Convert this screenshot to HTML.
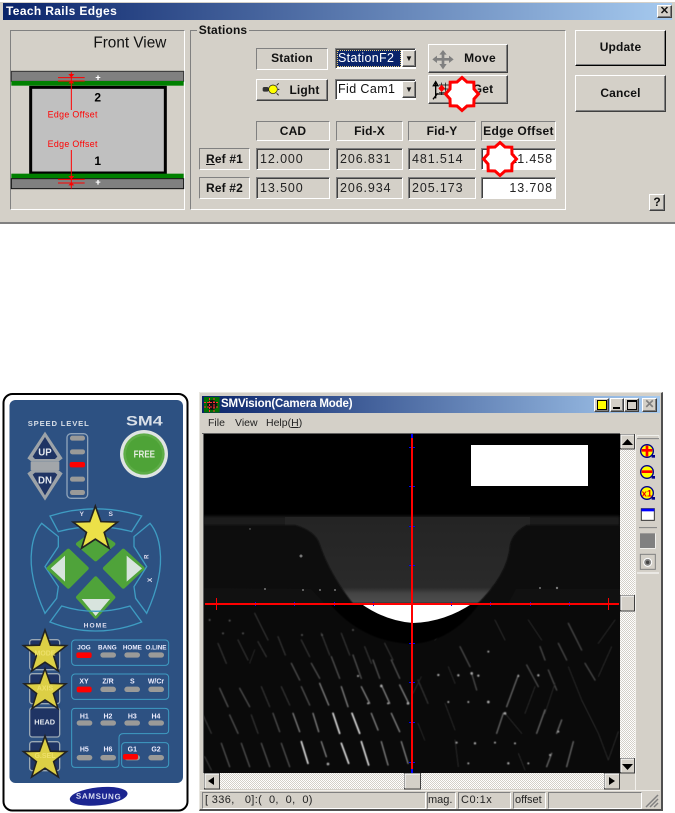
<!DOCTYPE html>
<html><head><meta charset="utf-8"><style>
html,body{margin:0;padding:0;background:#fff;width:675px;height:813px;overflow:hidden}
body{position:relative;font-family:"Liberation Sans",sans-serif;color:#111}
.a{position:absolute;box-sizing:border-box;text-align:center;white-space:pre}
.f{background:#d4d0c8}
.e{border:1px solid;border-color:#808080 #fff #fff #808080}
.r{border:1px solid;border-color:#fff #404040 #404040 #fff;box-shadow:inset -1px -1px #808080}
.s{border:1px solid;border-color:#808080 #fff #fff #808080;box-shadow:inset 1px 1px #404040}
.b{font-weight:bold;font-size:12px;letter-spacing:.15px}
.v{font-size:12.5px;letter-spacing:.9px;text-align:left;padding-left:3px;color:#222}
.t{font-size:11px;text-align:left;padding-left:2px;color:#222}
svg{position:absolute;left:0;top:0}
svg text{font-family:"Liberation Sans",sans-serif}
</style></head><body>

<!-- DIALOG -->
<div class="a f" style="left:0;top:2px;width:675px;height:222px;border-bottom:2px solid #808080"></div>
<div class="a" style="left:3px;top:3px;width:669px;height:17px;background:linear-gradient(90deg,#0a246a,#a6caef);color:#fff;font:bold 12px/16px 'Liberation Sans',sans-serif;letter-spacing:.35px;text-align:left;padding-left:3px">Teach Rails Edges</div>
<div class="a r f" style="left:657px;top:5px;width:15px;height:13px;font:bold 11px/11px 'Liberation Sans',sans-serif">✕</div>

<div class="a e" style="left:10px;top:30px;width:175px;height:180px"></div>
<div class="a e" style="left:190px;top:30px;width:376px;height:180px"></div>
<div class="a f b" style="left:197px;top:23px;width:52px;height:14px;line-height:14px">Stations</div>

<div class="a e b" style="left:256px;top:48px;width:72px;height:22px;line-height:19px">Station</div>
<div class="a r f b" style="left:256px;top:79px;width:72px;height:22px;line-height:20px;padding-left:25px">Light</div>

<div class="a s" style="left:335px;top:48px;width:81px;height:21px;background:#fff"></div>
<div class="a" style="left:337px;top:50px;width:64px;height:17px;background:#0a246a;color:#fff;font:12.5px/17px 'Liberation Sans',sans-serif;letter-spacing:.3px;outline:1px dotted #e8d080;outline-offset:-1px;text-align:left;padding-left:1px">StationF2</div>
<div class="a r f" style="left:402px;top:50px;width:14px;height:17px;font-size:8px;line-height:15px">▼</div>
<div class="a s" style="left:335px;top:79px;width:81px;height:21px;background:#fff"></div>
<div class="a" style="left:337px;top:81px;width:64px;height:17px;font:12.5px/17px 'Liberation Sans',sans-serif;letter-spacing:.4px;color:#111;text-align:left;padding-left:1px">Fid Cam1</div>
<div class="a r f" style="left:402px;top:81px;width:14px;height:17px;font-size:8px;line-height:15px">▼</div>

<div class="a r f b" style="left:428px;top:44px;width:80px;height:29px;line-height:27px;padding-left:24px;letter-spacing:.3px">Move</div>
<div class="a r f b" style="left:428px;top:75px;width:80px;height:29px;line-height:27px;padding-left:30px">Get</div>
<div class="a r f b" style="left:575px;top:30px;width:91px;height:36px;line-height:33px;border-right-color:#000;border-bottom-color:#000">Update</div>
<div class="a r f b" style="left:575px;top:75px;width:91px;height:37px;line-height:34px">Cancel</div>
<div class="a r f" style="left:649px;top:194px;width:16px;height:17px;font:bold 12px/15px 'Liberation Sans',sans-serif">?</div>

<div class="a e b" style="left:256px;top:121px;width:74px;height:20px;line-height:18px;font-weight:bold">CAD</div>
<div class="a e b" style="left:336px;top:121px;width:67px;height:20px;line-height:18px">Fid-X</div>
<div class="a e b" style="left:408px;top:121px;width:68px;height:20px;line-height:18px">Fid-Y</div>
<div class="a e b" style="left:481px;top:121px;width:75px;height:20px;line-height:18px;letter-spacing:.3px">Edge Offset</div>

<div class="a e b" style="left:199px;top:148px;width:51px;height:22px;line-height:20px"><u>R</u>ef #1</div>
<div class="a e b" style="left:199px;top:177px;width:51px;height:22px;line-height:20px">Ref #2</div>

<div class="a s v" style="left:256px;top:148px;width:74px;height:22px;line-height:20px">12.000</div>
<div class="a s v" style="left:336px;top:148px;width:67px;height:22px;line-height:20px">206.831</div>
<div class="a s v" style="left:408px;top:148px;width:68px;height:22px;line-height:20px">481.514</div>
<div class="a s v" style="left:481px;top:148px;width:75px;height:22px;line-height:20px;background:#fff;text-align:right;padding-right:2px">11.458</div>
<div class="a s v" style="left:256px;top:177px;width:74px;height:22px;line-height:20px">13.500</div>
<div class="a s v" style="left:336px;top:177px;width:67px;height:22px;line-height:20px">206.934</div>
<div class="a s v" style="left:408px;top:177px;width:68px;height:22px;line-height:20px">205.173</div>
<div class="a s v" style="left:481px;top:177px;width:75px;height:22px;line-height:20px;background:#fff;text-align:right;padding-right:2px">13.708</div>

<!-- CAMERA WINDOW -->
<div class="a f" style="left:199px;top:392px;width:464px;height:419px;border:1px solid;border-color:#e8e6e0 #505050 #505050 #e8e6e0;border-right-width:2px;border-bottom-width:2px"></div>
<div class="a" style="left:202px;top:396px;width:458px;height:17px;background:linear-gradient(90deg,#0a246a,#a6caef);color:#fff;font:bold 11.5px/16px 'Liberation Sans',sans-serif;letter-spacing:-.15px;text-align:left;padding-left:19px">SMVision(Camera Mode)</div>
<div class="a" style="left:208px;top:416px;font-size:10.5px;line-height:14px;color:#222">File</div>
<div class="a" style="left:235px;top:416px;font-size:10.5px;line-height:14px;color:#222">View</div>
<div class="a" style="left:266px;top:416px;font-size:10.5px;line-height:14px;color:#222">Help(<u>H</u>)</div>

<div class="a r f" style="left:594px;top:398px;width:15px;height:14px"></div>
<div class="a" style="left:597px;top:400px;width:10px;height:10px;background:#ff0;border:1px solid #000"></div>
<div class="a r f" style="left:610px;top:398px;width:14px;height:14px"></div>
<div class="a" style="left:613px;top:407px;width:7px;height:2px;background:#000"></div>
<div class="a r f" style="left:624px;top:398px;width:15px;height:14px"></div>
<div class="a" style="left:627px;top:400px;width:10px;height:10px;border:1px solid #000;border-top-width:2px"></div>
<div class="a r f" style="left:642px;top:398px;width:15px;height:14px;font:bold 12px/11px 'Liberation Sans',sans-serif;color:#808080">✕</div>

<!-- status bar -->
<div class="a e t" style="left:202px;top:792px;width:224px;height:17px;line-height:15px;border-color:#808080 #fff #fff #808080;letter-spacing:.35px">[ 336,   0]:(  0,  0,  0)</div>
<div class="a e t" style="left:427px;top:792px;width:29px;height:17px;line-height:15px;padding:0">mag.</div>
<div class="a e t" style="left:458px;top:792px;width:53px;height:17px;line-height:15px;letter-spacing:.5px">C0:1x</div>
<div class="a e t" style="left:513px;top:792px;width:33px;height:17px;line-height:15px;padding:0 0 0 1px">offset</div>
<div class="a e" style="left:548px;top:792px;width:94px;height:17px"></div>

<svg width="675" height="813" viewBox="0 0 675 813">
<defs>
<pattern id="dith" width="2" height="2" patternUnits="userSpaceOnUse"><rect width="2" height="2" fill="#fff"/><rect width="1" height="1" fill="#d4d0c8"/><rect x="1" y="1" width="1" height="1" fill="#d4d0c8"/></pattern>
<polygon id="star" points="0,-1 .24,-.33 .95,-.31 .38,.13 .59,.81 0,.42 -.59,.81 -.38,.13 -.95,-.31 -.24,-.33"/>
<polygon id="burst" points="0,-16.500 5,-12 11.800,-11.800 12,-5 16.500,0 12,5 11.800,11.800 5,12 0,16.500 -5,12 -11.800,11.800 -12,5 -16.500,0 -12,-5 -11.800,-11.800 -5,-12" fill="#fff" stroke="#f00" stroke-width="3"/>
<clipPath id="img"><rect x="203" y="434" width="417" height="339"/></clipPath>
<filter id="bl"><feGaussianBlur stdDeviation=".6"/></filter>
<filter id="bl2"><feGaussianBlur stdDeviation="1.5"/></filter>
<filter id="bl3"><feGaussianBlur stdDeviation=".35"/></filter>
<filter id="bl4" x="-5%" y="-5%" width="110%" height="110%"><feGaussianBlur stdDeviation="1.4"/></filter>
<linearGradient id="gc" x1="0" y1="0" x2="0" y2="1"><stop offset="0" stop-color="#242424"/><stop offset=".8" stop-color="#2a2a2a"/><stop offset=".87" stop-color="#444"/><stop offset="1" stop-color="#505050"/></linearGradient>
</defs>

<!-- Front view diagram -->
<g transform="scale(.33333)">
<rect x="34" y="214" width="517" height="30" fill="#808080" stroke="#333" stroke-width="3"/>
<rect x="34" y="243" width="517" height="14" fill="#008000"/>
<rect x="92" y="262" width="404" height="257" fill="#c0c0c0" stroke="#000" stroke-width="9"/>
<rect x="34" y="521" width="517" height="14" fill="#008000"/>
<rect x="34" y="536" width="517" height="30" fill="#808080" stroke="#111" stroke-width="3"/>
<g stroke="#f00" stroke-width="3" fill="none">
<path d="M214 216V330M174 233H254M174 243H254M214 450V566M174 538H254M174 549H254"/>
</g>
<g fill="#f00"><path d="M205 222H223L214 233ZM205 250H223L214 241ZM205 528H223L214 538ZM205 556H223L214 547Z"/></g>
<g fill="#fff"><path d="M292 226h4v5h5v3h-5v6h-4v-6h-5v-3h5zM292 540h4v5h5v3h-5v6h-4v-6h-5v-3h5z"/></g>
<text x="143" y="353" font-size="26.5" fill="#f00" letter-spacing="1">Edge Offset</text>
<text x="143" y="441" font-size="26.5" fill="#f00" letter-spacing="1">Edge Offset</text>
<text x="283" y="305" font-size="36" font-weight="bold" fill="#000">2</text>
<text x="283" y="495" font-size="36" font-weight="bold" fill="#000">1</text>
<text x="280" y="143" font-size="46" fill="#111">Front View</text>
<!-- Light icon -->
<circle cx="819" cy="268" r="13" fill="#ff0" stroke="#111" stroke-width="2"/>
<rect x="788" y="261" width="18" height="14" rx="5" fill="#333"/>
<path d="M830 256l6-6M830 280l6 6M834 268h4" stroke="#222" stroke-width="3"/>
</g>

<!-- Move / Get icons -->
<g transform="translate(425,40) scale(.33333)">
<path d="M54 30L65 44H58V54H72V47L86 58 72 69V62H58V72H65L54 88 43 72H50V62H36V69L22 58 36 47V54H50V44H43Z" fill="#808080"/>
<path d="M32 125V175M24 178L38 160M32 125l-7 12h14zM32 162H80" stroke="#000" stroke-width="4" fill="none"/>
<path d="M42 135H75M42 147H75M42 158H75M50 128V165M62 128V165" stroke="#000" stroke-width="2" fill="none"/>
<path d="M50 134l10 11-10 11-10-11z" fill="#f00"/>
</g>
<use href="#burst" x="462" y="94"/>
<use href="#burst" x="500" y="159"/>

<!-- camera title icon -->
<g transform="translate(204,397)">
<rect width="15.5" height="15.5" fill="#007000"/>
<circle cx="8" cy="8" r="5" fill="#111"/>
<path d="M0 5.500H15M0 10H15M5.500 1V15M10 1V15" stroke="#f33" stroke-width="1" stroke-dasharray="2 1"/>
</g>

<!-- CAMERA IMAGE -->
<rect x="203" y="434" width="417" height="339" fill="#000"/>
<g clip-path="url(#img)">
<rect x="203" y="516" width="417" height="12" fill="#1c1c1c" filter="url(#bl2)"/>
<rect x="285" y="517" width="245" height="88" fill="url(#gc)"/>
<path d="M203 525H295Q316 531 320 545Q330 575 355 606H203Z" fill="#0a0a0a" filter="url(#bl)"/>
<path d="M620 525H527Q513 532 510 545Q508 575 475 606H620Z" fill="#070707" filter="url(#bl)"/>
<path d="M204 588L311 589L325 604H204Z" fill="#111"/>
<path d="M204 588H312M516 588H620" stroke="#3c3c3c" stroke-width="2" filter="url(#bl)"/>
<path d="M508 604L516 589H620V604Z" fill="#111"/>
<g fill="#777" filter="url(#bl3)"><circle cx="301" cy="556" r="1.5"/><circle cx="335" cy="590" r="1"/><circle cx="250" cy="529" r=".7"/><circle cx="303" cy="590" r="1"/><circle cx="265" cy="589" r="1"/><circle cx="320" cy="590" r="1"/><circle cx="540" cy="588" r="1"/><circle cx="557" cy="588" r="1.2"/></g>

<!-- lattice left -->
<rect x="203" y="605" width="417" height="168" fill="#0a0a0a"/>
<g transform="translate(198,600) scale(.33333)" fill="none" stroke-linecap="round" filter="url(#bl4)">
<path stroke="#d8d8d8" stroke-width="5" d="M310 425L330 490M405 340L425 400M462 340L485 400M430 430L452 490M490 425L512 495"/>
<path stroke="#808080" stroke-width="4" d="M580 340L605 395M345 340L362 395M285 340L305 395M370 425L385 470M550 425L570 495M520 340L540 390M610 425L630 490M490 260L515 310M430 260L450 320M550 255L575 310M605 255L632 310M365 250L392 315"/>
<path stroke="#505050" stroke-width="4" d="M310 260L335 315M525 180L545 235M580 180L605 235M465 165L490 235M400 170L425 235M340 190L365 235M280 190L305 240M65 265L90 320M125 265L155 320M95 345L120 400M225 340L245 395M190 430L215 500M250 430L275 500M70 430L95 500M130 430L155 500"/>
<path stroke="#303030" stroke-width="4" d="M190 260L215 320M250 260L275 315M160 345L180 400M15 345L40 400M310 120L335 170M370 100L395 165M430 100L455 165M240 110L262 165M180 125L205 170M120 120L150 180M60 130L85 190M20 470L40 510M500 140L520 190M560 130L585 180M170 40L210 120M660 240L690 310"/>
<path stroke="#262626" stroke-width="3" d="M170 150L155 190M645 280L670 230M660 370L680 420"/>
<g stroke="none" fill="#aaa"><circle cx="630" cy="310" r="4"/><circle cx="510" cy="310" r="3"/><circle cx="570" cy="310" r="3"/><circle cx="550" cy="258" r="4"/><circle cx="390" cy="492" r="4"/><circle cx="480" cy="228" r="3"/></g>
<g stroke="none" fill="#555"><circle cx="135" cy="100" r="3"/><circle cx="75" cy="100" r="3"/><circle cx="35" cy="60" r="3"/><circle cx="95" cy="62" r="3"/><circle cx="312" cy="105" r="3"/><circle cx="372" cy="105" r="3"/><circle cx="465" cy="90" r="3"/></g>
</g>
<!-- lattice right -->
<g transform="translate(435,600) scale(.33333)" fill="none" stroke-linecap="round" filter="url(#bl4)">
<path stroke="#666" stroke-width="4" d="M250 225L215 320M330 330L305 400M205 340L185 400M380 360L365 400M350 460L335 500M415 425L395 500"/>
<path stroke="#484848" stroke-width="4" d="M315 140L330 180M370 130L395 180M400 70L440 150M450 190L480 240M275 195L310 260M340 210L365 270M75 140L105 200M110 220L125 270"/>
<path stroke="#2a2a2a" stroke-width="3" d="M400 200L440 300M440 300L490 400M490 400L520 480M550 395L520 480M60 420L70 500M40 200L60 250M30 310L60 390M280 60L320 120M210 340L260 400M250 460L270 510M490 230L530 140M540 60L490 130M300 260L270 340M30 80L0 120M180 60L210 120M360 250L330 340"/>
<g stroke="none" fill="#aaa"><circle cx="110" cy="220" r="4"/><circle cx="70" cy="226" r="3.500"/><circle cx="130" cy="227" r="3.500"/><circle cx="10" cy="225" r="3.500"/><circle cx="160" cy="155" r="3"/><circle cx="160" cy="306" r="4"/><circle cx="40" cy="306" r="3"/><circle cx="100" cy="306" r="3"/><circle cx="210" cy="340" r="4"/><circle cx="310" cy="226" r="3.500"/><circle cx="250" cy="228" r="3"/><circle cx="65" cy="428" r="3"/><circle cx="120" cy="430" r="3.500"/><circle cx="180" cy="428" r="3"/><circle cx="240" cy="430" r="3"/><circle cx="100" cy="490" r="3"/><circle cx="220" cy="490" r="3.500"/><circle cx="280" cy="490" r="3"/><circle cx="345" cy="465" r="3"/><circle cx="370" cy="395" r="3"/></g>
</g>
<!-- bowl -->
<path d="M329 603Q362 642 411 644Q452 642 480 603Z" fill="#000" filter="url(#bl)"/>
<path d="M360 603Q385 621 413 623Q445 622 473 603Z" fill="#fff" filter="url(#bl3)"/>
</g>
<rect x="471" y="445" width="117" height="41" fill="#fff"/>
<!-- crosshair -->
<g stroke="#00f" stroke-width="1"><path d="M409 447.500h6M409 486.500h6M409 526.500h6M409 565.500h6M409 643.500h6M409 682.500h6M409 722.500h6M409 762.500h6M255.500 602v4M294.500 602v4M334.500 602v4M373.500 602v4M451.500 602v4M490.500 602v4M530.500 602v4M569.500 602v4"/><path d="M412 434V438M412 769V773" stroke-width="2"/></g>
<path d="M412 438V769M205 604H619" stroke="#f00" stroke-width="2"/>
<path d="M216.500 598V610M608.500 598V610" stroke="#f00"/>

<!-- scrollbars -->
<rect x="620" y="434" width="15" height="339" fill="url(#dith)"/>
<rect x="204" y="773" width="416" height="16" fill="url(#dith)"/>
<g fill="#d4d0c8" stroke="#404040">
<path d="M620.500 449V434.500H634.500V449Z"/><path d="M620.500 611V595.500H634.500V611Z"/><path d="M620.500 773V758.500H634.500V773Z"/>
<path d="M204.500 789V773.500H219.500V789Z"/><path d="M404.500 789V773.500H420.500V789Z"/><path d="M604.500 789V773.500H619.500V789Z"/>
</g>
<g fill="none" stroke="#fff"><path d="M621 448V435H634M621 610V596H634M621 772V759H634M205 788V774H219M405 788V774H420M605 788V774H619"/></g>
<g fill="#000"><path d="M627.500 439L633 445H622ZM622 764H633L627.500 770ZM214 777V785L208 781ZM609 777L615 781 609 785Z"/></g>
<path d="M635.500 434V790" stroke="#f2f0ec"/>
<path d="M200 790.500H660" stroke="#f2f0ec"/>
<path d="M202 433.500H620M203.500 433V773" stroke="#606060"/>

<!-- toolbar -->
<g transform="translate(435,390) scale(.33333)">
<rect x="606" y="137" width="66" height="9" fill="#d4d0c8" stroke="#fff" stroke-width="2"/><path d="M606 146H672" stroke="#808080" stroke-width="3"/>
<circle cx="636" cy="183" r="19" fill="#ff0" stroke="#00008b" stroke-width="4"/><path d="M650 195h10v8h-10z" fill="#00008b"/><path d="M620 181H652M636 167V199" stroke="#f00" stroke-width="8"/>
<circle cx="636" cy="246" r="19" fill="#ff0" stroke="#00008b" stroke-width="4"/><path d="M650 258h10v8h-10z" fill="#00008b"/><path d="M620 245H652" stroke="#f00" stroke-width="8"/>
<circle cx="636" cy="309" r="19" fill="#ff0" stroke="#00008b" stroke-width="4"/><path d="M650 321h10v8h-10z" fill="#00008b"/><text x="620" y="320" font-size="28" font-weight="bold" fill="#e00">x1</text>
<rect x="619" y="356" width="39" height="35" fill="#fff" stroke="#333" stroke-width="3"/><rect x="619" y="356" width="39" height="8" fill="#00f"/>
<path d="M612 413H666" stroke="#808080" stroke-width="3"/>
<rect x="615" y="430" width="46" height="45" fill="#808080"/><path d="M615 475H661V430" stroke="#fff" stroke-width="2" fill="none"/>
<rect x="616" y="493" width="45" height="45" fill="#d4d0c8" stroke="#808080" stroke-width="3"/><circle cx="638" cy="517" r="12" fill="#888" stroke="#fff" stroke-width="3"/><circle cx="638" cy="517" r="5" fill="#444"/>
<path d="M606 549H672" stroke="#fff" stroke-width="3"/>
</g>
<!-- size grip -->
<path d="M646 807L658 795M650 807L658 799M654 807L658 803" stroke="#808080" stroke-width="1.500"/>

<!-- REMOTE top -->
<rect x="3.500" y="394" width="184" height="416.500" rx="9" fill="#fff" stroke="#000" stroke-width="2"/>
<rect x="9.500" y="400" width="173.500" height="383" rx="6" fill="#2d5182"/>

<g transform="translate(0,390) scale(.33333)">
<text x="176" y="108" font-size="23" font-weight="bold" fill="#d6dde6" text-anchor="middle" letter-spacing="2.500">SPEED LEVEL</text>
<polygon points="135,125 188,205 175,215 95,215 82,205" fill="#9da3a8"/>
<polygon points="135,141 172,200 165,207 105,207 98,200" fill="#1f3464"/>
<rect x="92" y="215" width="86" height="25" fill="#a2a6aa"/>
<polygon points="82,250 95,240 175,240 188,250 135,332" fill="#9da3a8"/>
<polygon points="98,254 105,248 165,248 172,254 135,316" fill="#1f3464"/>
<text x="135" y="197" font-size="29" font-weight="bold" fill="#e4e8ee" text-anchor="middle">UP</text>
<text x="135" y="280" font-size="29" font-weight="bold" fill="#e4e8ee" text-anchor="middle">DN</text>
<rect x="201" y="131" width="62" height="194" rx="12" fill="none" stroke="#8ea3ba" stroke-width="4"/>
<g fill="#9a9a98"><rect x="210" y="137" width="45" height="15" rx="7"/><rect x="210" y="178" width="45" height="15" rx="7"/><rect x="210" y="260" width="45" height="15" rx="7"/><rect x="210" y="300" width="45" height="15" rx="7"/></g>
<rect x="209" y="216" width="46" height="16" rx="6" fill="#f00"/>
<text x="433" y="107" font-size="42" font-weight="bold" fill="#d8dfe8" text-anchor="middle" textLength="110" lengthAdjust="spacingAndGlyphs">SM4</text>
<circle cx="432" cy="192" r="72" fill="#dfe4e2"/>
<circle cx="432" cy="192" r="62" fill="#5ead47"/>
<circle cx="432" cy="192" r="54" fill="#4ea337"/>
<text x="433" y="203" font-size="30" font-weight="bold" fill="#e6eee2" text-anchor="middle" textLength="64" lengthAdjust="spacingAndGlyphs">FREE</text>
<!-- dpad -->
<g fill="none" stroke="#3e9cc2" stroke-width="4">
<path d="M150 378Q285 335 425 378L395 425Q285 395 175 425Z"/>
<path d="M125 400L175 440V470L135 530L175 590L170 625L135 670Q85 560 95 480Q100 430 125 400Z"/>
<path d="M450 400L402 440V470L440 530L402 590L407 625L440 670Q490 560 480 480Q475 430 450 400Z"/>
</g>
<g fill="#4fa33a" stroke="#4fa33a" stroke-width="12" stroke-linejoin="round">
<polygon points="287,425 340,462 287,508 234,462"/>
<polygon points="205,482 260,535 205,590 146,535"/>
<polygon points="370,482 315,535 370,590 428,535"/>
<polygon points="287,565 340,622 287,680 234,622"/>
</g>
<g fill="#d8e4de">
<polygon points="195,497 195,575 152,535"/>
<polygon points="380,497 380,575 426,535"/>
</g>
<text x="245" y="378" font-size="20" font-weight="bold" fill="#dde" text-anchor="middle">Y</text>
<text x="332" y="378" font-size="20" font-weight="bold" fill="#dde" text-anchor="middle">S</text>
<text font-size="18" font-weight="bold" fill="#dde" text-anchor="middle" transform="translate(445,500) rotate(-90)">R</text>
<text font-size="20" font-weight="bold" fill="#dde" text-anchor="middle" transform="translate(456,570) rotate(-90)">X</text>
<use href="#star" transform="translate(286,418) scale(70)" fill="#ece048" stroke="#222" stroke-width=".07"/>
</g>

<g transform="translate(0,600) scale(.33333)">
<polygon points="245,-3 330,-3 287,48" fill="#d8e4de"/>
<text x="287" y="82" font-size="20" font-weight="bold" fill="#dde" text-anchor="middle" letter-spacing="3">HOME</text>
<path d="M185 18L150 66Q285 120 425 66L390 18Q287 50 185 18Z" fill="none" stroke="#3e9cc2" stroke-width="4"/>
<!-- mode buttons -->
<g fill="#1f3464" stroke="#9aa8b4" stroke-width="4">
<rect x="89" y="119" width="90" height="90" rx="8"/><rect x="89" y="221" width="90" height="90" rx="8"/><rect x="89" y="323" width="90" height="88" rx="8"/><rect x="89" y="425" width="90" height="87" rx="8"/>
</g>
<text x="134" y="374" font-size="22" font-weight="bold" fill="#e4e8ee" text-anchor="middle">HEAD</text>
<!-- groups -->
<g fill="none" stroke="#3e9cc2" stroke-width="3">
<rect x="215" y="120" width="291" height="76" rx="10"/>
<rect x="215" y="222" width="291" height="76" rx="10"/>
<path d="M225 325H495Q506 325 506 336V390Q506 401 495 401H370Q357 401 357 414V490Q357 502 345 502H225Q215 502 215 492V335Q215 325 225 325Z"/>
<rect x="365" y="428" width="141" height="74" rx="10"/>
</g>
<g fill="#eef" font-weight="bold" font-size="19" text-anchor="middle">
<text x="252" y="148">JOG</text><text x="322" y="148">BANG</text><text x="397" y="148">HOME</text><text x="468" y="148">O.LINE</text>
<text x="252" y="251" font-size="21">XY</text><text x="324" y="251" font-size="21">Z/R</text><text x="397" y="251" font-size="21">S</text><text x="468" y="251" font-size="21">W/Cr</text>
<text x="253" y="355" font-size="21">H1</text><text x="324" y="355" font-size="21">H2</text><text x="397" y="355" font-size="21">H3</text><text x="468" y="355" font-size="21">H4</text>
<text x="253" y="455" font-size="21">H5</text><text x="324" y="455" font-size="21">H6</text><text x="397" y="455" font-size="21">G1</text><text x="468" y="455" font-size="21">G2</text>
</g>
<g fill="#9a9a98">
<rect x="301" y="157" width="47" height="16" rx="8"/><rect x="373" y="157" width="47" height="16" rx="8"/><rect x="445" y="157" width="47" height="16" rx="8"/>
<rect x="301" y="260" width="47" height="16" rx="8"/><rect x="373" y="260" width="47" height="16" rx="8"/><rect x="445" y="260" width="47" height="16" rx="8"/>
<rect x="230" y="361" width="47" height="16" rx="8"/><rect x="301" y="361" width="47" height="16" rx="8"/><rect x="373" y="361" width="47" height="16" rx="8"/><rect x="445" y="361" width="47" height="16" rx="8"/>
<rect x="230" y="465" width="47" height="16" rx="8"/><rect x="301" y="465" width="47" height="16" rx="8"/><rect x="373" y="465" width="47" height="16" rx="8"/><rect x="445" y="465" width="47" height="16" rx="8"/>
</g>
<g fill="#f00">
<rect x="229" y="157" width="46" height="17" rx="6"/><rect x="230" y="260" width="45" height="17" rx="6"/><rect x="369" y="462" width="45" height="17" rx="6"/>
</g>
<use href="#star" transform="translate(135,158) scale(68)" fill="#dccf45" stroke="#222" stroke-width=".07"/>
<use href="#star" transform="translate(135,272) scale(66)" fill="#dccf45" stroke="#222" stroke-width=".07"/>
<use href="#star" transform="translate(135,476) scale(68)" fill="#dccf45" stroke="#222" stroke-width=".07"/>
<g fill="#eee06a" font-weight="bold" font-size="21" text-anchor="middle"><text x="135" y="167">MODE</text><text x="135" y="272">AXIS</text><text x="135" y="474">G.SEL</text></g>
<ellipse cx="296" cy="589" rx="87" ry="27" transform="rotate(-6 296 589)" fill="#1b2590"/>
<text x="296" y="597" font-size="24" font-weight="bold" fill="#d8dcf0" text-anchor="middle" letter-spacing="2" transform="rotate(1 296 589)">SAMSUNG</text>
</g>
</svg>
</body></html>
